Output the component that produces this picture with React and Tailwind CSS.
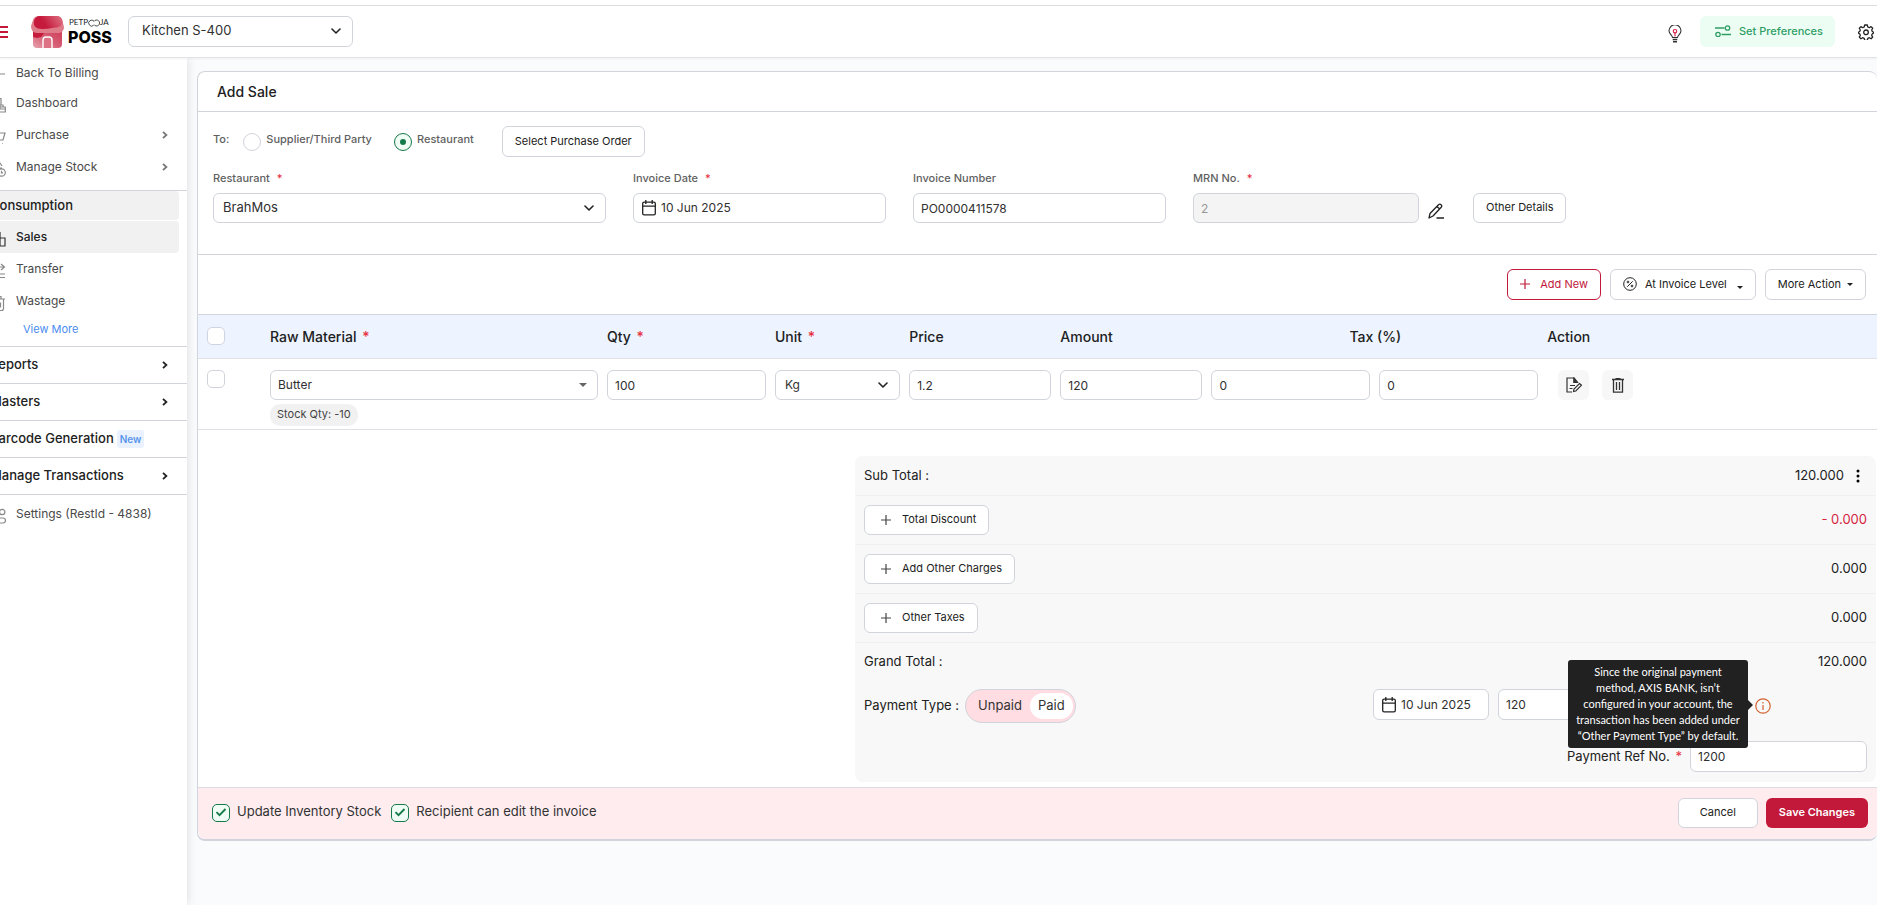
import { useState } from 'react';
import { clsx } from 'clsx';

const inputClass =
  'w-full h-[30px] rounded-md border border-[#d1d4dc] bg-white px-[7px] text-[12px] text-[#303030] outline-none';
const buttonClass =
  'flex items-center justify-center rounded-md border border-[#d1d4dc] bg-white pb-px text-[11px] text-[#212121] whitespace-nowrap';

function Chevron({ className }) {
  return (
    <svg viewBox="0 0 10 6" className={clsx('w-[10px] h-[6px]', className)} fill="none" stroke="currentColor" strokeWidth="1.6" strokeLinecap="round" strokeLinejoin="round">
      <path d="M1 1l4 4 4-4" />
    </svg>
  );
}

function ChevronRight({ className }) {
  return (
    <svg viewBox="0 0 6 8" className={clsx('w-[6px] h-[8px]', className)} fill="none" stroke="currentColor" strokeWidth="1.8">
      <path d="M1 .8L4.4 4 1 7.2" />
    </svg>
  );
}

function Caret({ className }) {
  return (
    <svg viewBox="0 0 8 4" className={className} fill="currentColor">
      <path d="M0 0h8L4 4z" />
    </svg>
  );
}

function Plus({ className }) {
  return (
    <svg viewBox="0 0 10 10" className={clsx('w-[10px] h-[10px]', className)} fill="none" stroke="currentColor" strokeWidth="1.2">
      <path d="M5 0v10M0 5h10" />
    </svg>
  );
}

function CalendarIcon() {
  return (
    <svg viewBox="0 0 14 16" className="w-[14px] h-4 shrink-0 text-[#222]" fill="none" stroke="currentColor" strokeWidth="1.3">
      <rect x=".7" y="2.2" width="12.6" height="12.6" rx="1.4" />
      <path d="M.7 6.2h12.6M3.8 0v4M10.2 0v4" />
    </svg>
  );
}

function Star({ className }) {
  return <span className={clsx('text-[#e8303f]', className)}>*</span>;
}

function SelectBox({ id, label, value, options, className, textClass, caret }) {
  return (
    <div className={clsx('relative', className)}>
      <select
        id={id}
        aria-label={label}
        defaultValue={value}
        className={clsx('w-full h-full appearance-none rounded-md border border-[#d1d4dc] bg-white pr-7 pb-px text-[#303030] outline-none', textClass)}
      >
        {options.map((o) => (
          <option key={o}>{o}</option>
        ))}
      </select>
      {caret ? (
        <Caret className="pointer-events-none absolute right-[11px] top-[13px] w-2 h-1 text-[#666]" />
      ) : (
        <Chevron className="pointer-events-none absolute right-[12px] top-[12px] text-[#222]" />
      )}
    </div>
  );
}

function DateBox({ id, label, className, value }) {
  return (
    <div className={clsx('flex items-center gap-[5px] rounded-md border border-[#d1d4dc] bg-white pl-2', className)}>
      <CalendarIcon />
      <input id={id} aria-label={label} defaultValue={value} className="w-full min-w-0 bg-transparent text-[12px] text-[#303030] outline-none" />
    </div>
  );
}

function CheckBox({ id, label, defaultChecked }) {
  return (
    <span className="relative block w-[18px] h-[18px] shrink-0">
      <input
        id={id}
        type="checkbox"
        aria-label={label}
        defaultChecked={defaultChecked}
        className="peer block w-[18px] h-[18px] appearance-none rounded-[5px] border border-[#d1d4dc] bg-white checked:border-[#157a4a] checked:bg-[#effdf4]"
      />
      <svg viewBox="0 0 18 18" className="pointer-events-none absolute inset-0 hidden peer-checked:block text-[#157a4a]" fill="none" stroke="currentColor" strokeWidth="1.8">
        <path d="M4.5 8.200l3 3 6-6.200" />
      </svg>
    </span>
  );
}

function RadioOption({ id, label, className, defaultChecked }) {
  return (
    <div className={clsx('flex items-center', className)}>
      <span className="relative block w-[18px] h-[18px]">
        <input
          id={id}
          type="radio"
          name="sale-to"
          defaultChecked={defaultChecked}
          className="peer block w-[18px] h-[18px] appearance-none rounded-full border border-[#d1d4dc] bg-white checked:border-[#157a4a] checked:bg-[#effdf4]"
        />
        <span className="pointer-events-none absolute inset-[6px] hidden rounded-full bg-[#157a4a] peer-checked:block" />
      </span>
      <label htmlFor={id} className="pl-[5px] pb-1 text-[11px] font-medium text-[#5f5f5f]">{label}</label>
    </div>
  );
}

function Logo() {
  return (
    <div className="flex items-center gap-1">
      <svg viewBox="0 0 33 32" className="w-[33px] h-8">
        <defs>
          <linearGradient id="roof" x1="0" y1="0.6" x2="1" y2="0.3">
            <stop offset="0.35" stopColor="#c51a3b" />
            <stop offset="1" stopColor="#dc6b7e" />
          </linearGradient>
          <linearGradient id="wall" x1="0" y1="1" x2="1" y2="0">
            <stop offset="0" stopColor="#e7a3ad" />
            <stop offset="0.5" stopColor="#d65c74" />
            <stop offset="1" stopColor="#cf3a57" />
          </linearGradient>
        </defs>
        <path d="M2 13h29v15a4 4 0 0 1-4 4H6a4 4 0 0 1-4-4z" fill="url(#wall)" />
        <path d="M2 16h12l-4 5-4 1-4-1z" fill="#c51a3b" />
        <path d="M8 0h17c4 0 6 2 6.500 5L33 11c0 4-3 6-6 6H6c-4 0-6-3-6-7l2-6C3 1 5 0 8 0z" fill="#df7c8a" />
        <path d="M9 0h16c4 0 6 2 6.500 5 .3 4-2 6-6 6.500C19 12 17 13 11 13 5 13 2 10 3 5c.6-3 3-5 6-5z" fill="url(#roof)" />
        <path d="M12 32v-8a3 3 0 0 1 3-3h3a3 3 0 0 1 3 3v8" fill="#dd7385" stroke="#fff" strokeWidth="1.400" />
      </svg>
      <div className="flex flex-col gap-[2px]">
        <span className="flex items-center pl-px font-[Lato] text-[8px] leading-[9px] text-[#222]">
          PETP
          <svg viewBox="0 0 12 8" className="w-3 h-2" fill="none" stroke="currentColor" strokeWidth=".8">
            <path d="M5.500 6.500A3 3 0 1 1 6 2.200M6 5.500a3 3 0 1 0 0-3" />
          </svg>
          JA
        </span>
        <span className="text-[16px] leading-[16px] font-extrabold text-black">POSS</span>
      </div>
    </div>
  );
}

function Header() {
  return (
    <header className="relative z-10 flex h-[53px] items-center border-t border-b border-t-[#dcdcdc] border-b-[#e3e3e6] bg-white shadow-xs">
      <button aria-label="Menu" className="-ml-[6px] text-[#c2183a]">
        <svg viewBox="0 0 14 12" className="w-[14px] h-3" fill="none" stroke="currentColor" strokeWidth="2">
          <path d="M0 1h14M0 6h14M0 11h14" />
        </svg>
      </button>
      <div className="ml-[23px] w-[83px]"><Logo /></div>
      <SelectBox label="Outlet" value="Kitchen S-400" options={['Kitchen S-400']} className="ml-[14px] w-[225px] h-[31px]" textClass="pl-[13px] text-[13px]" />
      <div className="ml-auto flex items-center">
        <button aria-label="Tips" className="mr-[18px] mt-1">
          <svg viewBox="0 0 14 18" className="w-[14px] h-[18px]" fill="none" stroke="#333" strokeWidth="1.100">
            <path d="M4.500 12.500c0-2-3.500-3.500-3.500-6.700a6 6 0 0 1 12 0c0 3.200-3.500 4.700-3.500 6.700z" />
            <path d="M4.700 14.500h4.600M5 16.700h4" strokeWidth="1.600" />
            <path d="M7 11.500V8" stroke="#d81f45" />
            <circle cx="7" cy="6.200" r="1.700" stroke="#d81f45" />
          </svg>
        </button>
        <button className="flex h-[31px] items-center gap-2 rounded-md bg-[#ecfdf3] pl-[15px] pr-[12px] pb-px text-[11px] font-medium text-[#2f9e66]">
          <svg viewBox="0 0 16 12" className="w-4 h-3" fill="none" stroke="currentColor" strokeWidth="1.300">
            <path d="M0 3h9.500M6.500 9.500H16" />
            <circle cx="12.500" cy="3" r="2.200" />
            <circle cx="3" cy="9.500" r="2.200" />
          </svg>
          Set Preferences
        </button>
        <button aria-label="Settings" className="ml-[23px] mr-[3px]">
          <svg viewBox="0 0 24 24" className="w-4 h-4" fill="none" stroke="#222" strokeWidth="1.900" strokeLinejoin="round">
            <path d="M10 1.500h4l.7 3 2.300 1 2.600-1.600 2.500 2.500-1.600 2.600 1 2.300 1.500.7v2l-1.500.7-1 2.300 1.600 2.600-2.500 2.500-2.600-1.600-2.300 1-.7 3h-4l-.7-3-2.300-1-2.600 1.600-2.500-2.500L3.500 17l-1-2.300-1.500-.7v-2l1.500-.7 1-2.300L1.900 6.400l2.500-2.500L7 5.500l2.300-1z" />
            <circle cx="12" cy="12.500" r="3.500" />
          </svg>
        </button>
      </div>
    </header>
  );
}

const navIcons = {
  back: <path d="M15 8H2M6 4L2 8l4 4" />,
  dashboard: <path d="M5 8V1.500h6V8M3 8h10v2M10 10h5.300v5H1V8M10 8v4h5" />,
  purchase: <path d="M0 2h3l2 9h8l2-7H4M6 14.500h.6M12 14.500h.6" />,
  stock: <path d="M1 14V6l5-4h4l2 3M8 7h4M15.300 11.500a3.700 3.700 0 1 1-7.400 0 3.700 3.700 0 0 1 7.400 0zM11.500 9.800v2h1.500" />,
  sales: <path d="M1 15V6h4v9M5 15V1.500h5V15M10 15V7h5v8M0 15h15.500" />,
  transfer: <path d="M3 4h11M11 1l3.500 3L11 7M15 11H1M1 14.500h14" />,
  wastage: <path d="M1 4h14M5 4V1.500h6V4M2.500 4v9.500a2 2 0 0 0 2 2h7a2 2 0 0 0 2-2V4M6.500 7.500v5M10.500 7.500v5" />,
  settings: <path d="M1 4h6M9.500 4a2.700 2.700 0 1 1 5.400 0 2.700 2.700 0 0 1-5.400 0M2 10h11a2.300 2.300 0 0 1 0 5H2z" />,
};

function NavItem({ icon, label, arrow, active, className }) {
  return (
    <a
      href="#"
      className={clsx(
        'flex items-center gap-[10px] text-[12px]',
        active ? 'mr-2 rounded-r bg-[#f1f1f1] font-medium text-[#212121]' : 'text-[#4a4a4a]',
        className
      )}
    >
      <svg viewBox="0 0 16 16" className={clsx('w-4 h-4 mt-[3px]', active ? 'text-[#333]' : 'text-[#888]')} fill="none" stroke="currentColor" strokeWidth="1.200">
        {navIcons[icon]}
      </svg>
      {label}
      {arrow && <ChevronRight className="ml-auto mr-[19px] text-[#777]" />}
    </a>
  );
}

function NavSection({ label, arrow, badge }) {
  return (
    <a href="#" className="flex h-[37px] items-center border-t border-[#d1d4dc] text-[13px] font-medium text-[#212121] whitespace-nowrap">
      {label}
      {badge && <span className="ml-[3px] rounded-[3px] bg-[#e9f2fe] px-[3px] text-[10px] leading-[18px] font-semibold text-[#5b95ec]">{badge}</span>}
      {arrow && <ChevronRight className="ml-auto mr-[19px]" />}
    </a>
  );
}

function Sidebar() {
  return (
    <aside className="w-[187px] shrink-0 overflow-hidden bg-white shadow-[0_0_10px_rgba(0,0,0,0.13)]">
      <nav className="-ml-[10px]">
        <NavItem icon="back" label="Back To Billing" className="h-[29px]" />
        <NavItem icon="dashboard" label="Dashboard" className="h-8" />
        <NavItem icon="purchase" label="Purchase" arrow className="h-8" />
        <NavItem icon="stock" label="Manage Stock" arrow className="h-8" />
        <div className="mt-[7px] border-t border-[#d1d4dc] pb-[5px]">
          <h2 className="mr-2 mb-px flex h-[29px] items-center rounded-r bg-[#f1f1f1] text-[13px] font-medium text-[#212121]">Consumption</h2>
          <NavItem icon="sales" label="Sales" active className="h-8" />
          <NavItem icon="transfer" label="Transfer" className="h-8" />
          <NavItem icon="wastage" label="Wastage" className="h-8" />
          <a href="#" className="ml-[33px] flex h-6 items-center text-[11px] text-[#4a8cf0]">View More</a>
        </div>
        <NavSection label="Reports" arrow />
        <NavSection label="Masters" arrow />
        <NavSection label="Barcode Generation" badge="New" />
        <NavSection label="Manage Transactions" arrow />
        <div className="border-t border-[#d1d4dc] pt-[3px]">
          <NavItem icon="settings" label="Settings (RestId - 4838)" className="h-8" />
        </div>
      </nav>
    </aside>
  );
}

function Field({ id, label, required, className, children }) {
  return (
    <div className={className}>
      <label htmlFor={id} className="flex h-[22px] items-start text-[11px] leading-[14px] font-medium text-[#5f5f5f]">
        {label}
        {required && <Star className="ml-[7px]" />}
      </label>
      {children}
    </div>
  );
}

function SaleForm() {
  return (
    <section className="border-b border-[#d1d4dc] pt-[14px] pb-[31px] pl-[15px] pr-[11px]">
      <div className="flex h-[31px] items-center">
        <span className="pb-1 text-[11px] font-medium text-[#5f5f5f]">To:</span>
        <RadioOption id="to-supplier" label="Supplier/Third Party" className="ml-[14px]" />
        <RadioOption id="to-restaurant" label="Restaurant" defaultChecked className="ml-[22px]" />
        <button className={clsx(buttonClass, 'ml-[28px] h-[31px] px-[12px]')}>Select Purchase Order</button>
      </div>
      <div className="mt-[14px] grid grid-cols-12 gap-x-[27px]">
        <Field id="restaurant" label="Restaurant" required className="col-span-3">
          <SelectBox id="restaurant" value="BrahMos" options={['BrahMos']} className="h-[30px]" textClass="pl-[9px] text-[13px]" />
        </Field>
        <Field id="invoice-date" label="Invoice Date" required className="col-span-2">
          <DateBox id="invoice-date" value="10 Jun 2025" className="h-[30px]" />
        </Field>
        <Field id="invoice-number" label="Invoice Number" className="col-span-2">
          <input id="invoice-number" defaultValue="PO0000411578" className={inputClass} />
        </Field>
        <Field id="mrn" label="MRN No." required className="col-span-2">
          <div className="flex items-center gap-[9px] pr-[2px]">
            <input id="mrn" disabled defaultValue="2" className="h-[30px] w-full min-w-0 rounded-md border border-[#d1d4dc] bg-[#f4f4f4] px-[7px] text-[12px] text-[#999]" />
            <button aria-label="Edit MRN" className="mt-[6px]">
              <svg viewBox="0 0 16 16" className="w-4 h-4" fill="none" stroke="#222" strokeWidth="1.300" strokeLinejoin="round">
                <path d="M1 15l1-4.500L10.500 1.800a1.800 1.800 0 0 1 2.700 2.500L5 13zM9 3.500l2.700 2.500M8.500 15H16" />
              </svg>
            </button>
          </div>
        </Field>
        <div className="col-span-2 flex items-end">
          <button className={clsx(buttonClass, 'h-[30px] px-[12px]')}>Other Details</button>
        </div>
      </div>
    </section>
  );
}

function Toolbar() {
  return (
    <div className="flex justify-end gap-[9px] py-[14px] pr-[11px]">
      <button className="flex h-[31px] items-center gap-[10px] rounded-md border border-[#c2183a] px-[12px] pb-px text-[11px] text-[#c2183a]">
        <Plus />
        Add New
      </button>
      <button className={clsx(buttonClass, 'h-[31px] px-[12px]')}>
        <svg viewBox="0 0 14 14" className="mr-2 w-[14px] h-[14px]" fill="none" stroke="#222" strokeWidth="1">
          <circle cx="7" cy="7" r="6.300" />
          <path d="M4.300 9.700l5.400-5.400" />
          <circle cx="5" cy="5" r=".9" />
          <circle cx="9" cy="9" r=".9" />
        </svg>
        At Invoice Level
        <Caret className="ml-[10px] mt-[6px] w-[6px] h-[3px]" />
      </button>
      <button className={clsx(buttonClass, 'h-[31px] px-[12px]')}>
        More Action
        <Caret className="ml-[6px] w-[6px] h-[3px]" />
      </button>
    </div>
  );
}

function ItemsTable() {
  return (
    <table className="w-full table-fixed border-t border-[#d1d4dc] text-left">
      <colgroup>
        <col className="w-[72px]" />
        <col className="w-[337px]" />
        <col className="w-[10%]" />
        <col className="w-[8%]" />
        <col className="w-[9%]" />
        <col className="w-[9%]" />
        <col className="w-[10%]" />
        <col className="w-[10%]" />
        <col />
      </colgroup>
      <thead>
        <tr className="h-[44px] border-b border-[#dfe1e6] bg-[#edf4ff] text-[14px] text-[#212121] [&>th]:pb-px">
          <th className="pl-[9px]"><CheckBox label="Select all" /></th>
          <th className="font-medium">Raw Material <Star className="ml-[2px]" /></th>
          <th className="font-medium">Qty <Star className="ml-[2px]" /></th>
          <th className="font-medium">Unit <Star className="ml-[2px]" /></th>
          <th className="font-medium">Price</th>
          <th className="font-medium">Amount</th>
          <th colSpan={2} className="pr-2 text-center font-medium">Tax (%)</th>
          <th className="font-medium">Action</th>
        </tr>
      </thead>
      <tbody>
        <tr className="border-b border-[#dfe1e6] align-top [&>td]:pt-[11px]">
          <td className="pl-[9px]"><CheckBox label="Select Butter" /></td>
          <td className="pr-[9px] pb-[3px]">
            <SelectBox label="Raw material" value="Butter" options={['Butter']} caret className="h-[30px]" textClass="pl-[7px] text-[12px]" />
            <span className="mt-1 flex h-[22px] w-fit items-center rounded-[10px] bg-[#f1f1f1] px-[7px] pb-px text-[11px] text-[#444]">Stock Qty: -10</span>
          </td>
          <td className="pr-[9px]"><input aria-label="Qty" defaultValue="100" className={inputClass} /></td>
          <td className="pr-[9px]">
            <SelectBox label="Unit" value="Kg" options={['Kg']} className="h-[30px]" textClass="pl-[9px] text-[12px]" />
          </td>
          <td className="pr-[9px]"><input aria-label="Price" defaultValue="1.2" className={inputClass} /></td>
          <td className="pr-[9px]"><input aria-label="Amount" defaultValue="120" className={inputClass} /></td>
          <td className="pr-[9px]"><input aria-label="Tax 1" defaultValue="0" className={inputClass} /></td>
          <td className="pr-[9px]"><input aria-label="Tax 2" defaultValue="0" className={inputClass} /></td>
          <td>
            <div className="flex gap-[13px] pl-[11px]">
              <button aria-label="Edit row" className="flex h-[30px] w-[31px] items-center justify-center rounded-md bg-[#f7f7f7]">
                <svg viewBox="0 0 16 16" className="w-4 h-4" fill="none" stroke="#333" strokeWidth="1.200">
                  <path d="M11.500 5.500L8 1H1v14h5M8 1v4.500h3.500" />
                  <path d="M8 1v4.500h3.500z" fill="#333" />
                  <path d="M4 8.500h5M3.500 11.500h3" />
                  <path d="M7.500 14.500l.5-2.500 5.500-5.500 2 1.700L9.800 14z" />
                </svg>
              </button>
              <button aria-label="Delete row" className="flex h-[30px] w-[31px] items-center justify-center rounded-md bg-[#f7f7f7]">
                <svg viewBox="0 0 12 15" className="w-3 h-[15px]" fill="none" stroke="#333" strokeWidth="1.300">
                  <path d="M0 1.500h12M3.500 .7h5M1.500 1.500v12.700h9V1.500M4.500 4v8M7.500 4v8" />
                </svg>
              </button>
            </div>
          </td>
        </tr>
      </tbody>
    </table>
  );
}

const charges = [
  { label: 'Total Discount', value: '- 0.000', negative: true },
  { label: 'Add Other Charges', value: '0.000' },
  { label: 'Other Taxes', value: '0.000' },
];

function Tooltip() {
  return (
    <div role="tooltip" className="absolute right-full top-1/2 mr-[7px] -mt-[46px] w-[180px] rounded-[3px] bg-[#212121] py-1 text-center font-[Lato] text-[11px] leading-4 text-white">
      Since the original payment
      <br />
      method, AXIS BANK, isn’t
      <br />
      configured in your account, the
      <br />
      transaction has been added under
      <br />
      “Other Payment Type” by default.
      <span className="absolute left-full top-10 border-y-[5px] border-l-[5px] border-y-transparent border-l-[#212121]" />
    </div>
  );
}

function Totals() {
  const [status, setStatus] = useState('Paid');

  return (
    <section className="mt-[26px] ml-[657px] mr-px mb-[5px] rounded-lg bg-[#f8f8f8] text-[13px] text-[#212121] [&>div]:pl-[9px] [&>div]:pr-[9px]">
      <div className="flex h-10 items-center border-b border-[#f0f0f0]">
        Sub Total :
        <span className="ml-auto">120.000</span>
        <button aria-label="More" className="ml-3 mr-[7px]">
          <svg viewBox="0 0 4 14" className="w-1 h-[14px]">
            <circle cx="2" cy="2" r="1.500" />
            <circle cx="2" cy="7" r="1.500" />
            <circle cx="2" cy="12" r="1.500" />
          </svg>
        </button>
      </div>
      {charges.map(({ label, value, negative }) => (
        <div key={label} className="flex items-center justify-between border-b border-[#f0f0f0] py-[9px]">
          <button className={clsx(buttonClass, 'h-[30px] gap-[11px] pl-4 pr-[12px]')}>
            <Plus className="text-[#444]" />
            {label}
          </button>
          <span className={clsx(negative && 'text-[#d5243f]')}>{value}</span>
        </div>
      ))}
      <div className="flex h-[37px] items-center justify-between">
        Grand Total :
        <span>120.000</span>
      </div>
      <div className="flex items-center pt-[9px]">
        Payment Type :
        <div className="ml-[6px] flex h-[34px] items-center rounded-full border border-[#d1d4dc] bg-[#ffdde2] pl-1 pr-[2px] text-[#333]">
          {['Unpaid', 'Paid'].map((s) => (
            <button key={s} onClick={() => setStatus(s)} className={clsx('h-[26px] rounded-full px-[8px]', status === s && 'bg-white')}>
              {s}
            </button>
          ))}
        </div>
        <DateBox label="Payment date" value="10 Jun 2025" className="ml-auto mb-[3px] w-[116px] h-[31px]" />
        <input aria-label="Payment amount" defaultValue="120" className="mb-[3px] ml-[9px] h-[31px] w-[246px] rounded-md border border-[#d1d4dc] bg-white px-[7px] text-[12px] text-[#303030]" />
        <div className="relative ml-[11px] mr-[96px] w-4 h-4">
          <svg viewBox="0 0 16 16" className="w-4 h-4" fill="none" stroke="#d2622f" strokeWidth="1.200">
            <circle cx="8" cy="8" r="7.200" />
            <path d="M8 7v5M8 4v1.500" />
          </svg>
          <Tooltip />
        </div>
      </div>
      <div className="flex items-center justify-end pt-[18px] pb-[10px]">
        <label htmlFor="payment-ref">Payment Ref No. <Star className="ml-[2px]" /></label>
        <input id="payment-ref" defaultValue="1200" className="ml-2 h-[31px] w-[177px] rounded-md border border-[#d1d4dc] bg-white px-[7px] pb-px text-[12px] text-[#303030]" />
      </div>
    </section>
  );
}

function Footer() {
  return (
    <footer className="flex h-[52px] items-start rounded-b-lg border-t border-[#dbdde3] bg-[#feecee] pt-[10px] pl-[14px] pr-[9px]">
      <div className="mt-1 flex items-center">
        <CheckBox id="update-stock" defaultChecked />
        <label htmlFor="update-stock" className="ml-[7px] pb-[2px] text-[13px] text-[#333]">Update Inventory Stock</label>
      </div>
      <div className="mt-1 ml-[10px] flex items-center">
        <CheckBox id="recipient-edit" defaultChecked />
        <label htmlFor="recipient-edit" className="ml-[7px] pb-[2px] text-[13px] text-[#333]">Recipient can edit the invoice</label>
      </div>
      <button className={clsx(buttonClass, 'ml-auto h-[30px] w-[80px]')}>Cancel</button>
      <button className="ml-2 h-[30px] rounded-md bg-[#c2183a] px-[13px] pb-px text-[11px] font-semibold text-white">Save Changes</button>
    </footer>
  );
}

export default function App() {
  return (
    <div className="flex min-h-screen flex-col overflow-x-hidden bg-[#fafbfd] pt-[5px] font-[Inter,sans-serif] [background-image:linear-gradient(#fff_5px,transparent_5px)]">
      <Header />
      <div className="flex grow items-stretch">
        <Sidebar />
        <main className="min-w-0 grow pl-[10px] pt-[13px]">
          <div className="rounded-lg border border-b-2 border-r-0 border-[#d1d4dc] bg-white">
            <h1 className="flex h-10 items-center border-b border-[#d1d4dc] pl-[19px] text-[14px] font-medium text-[#212121]">Add Sale</h1>
            <SaleForm />
            <Toolbar />
            <ItemsTable />
            <Totals />
            <Footer />
          </div>
        </main>
      </div>
    </div>
  );
}
